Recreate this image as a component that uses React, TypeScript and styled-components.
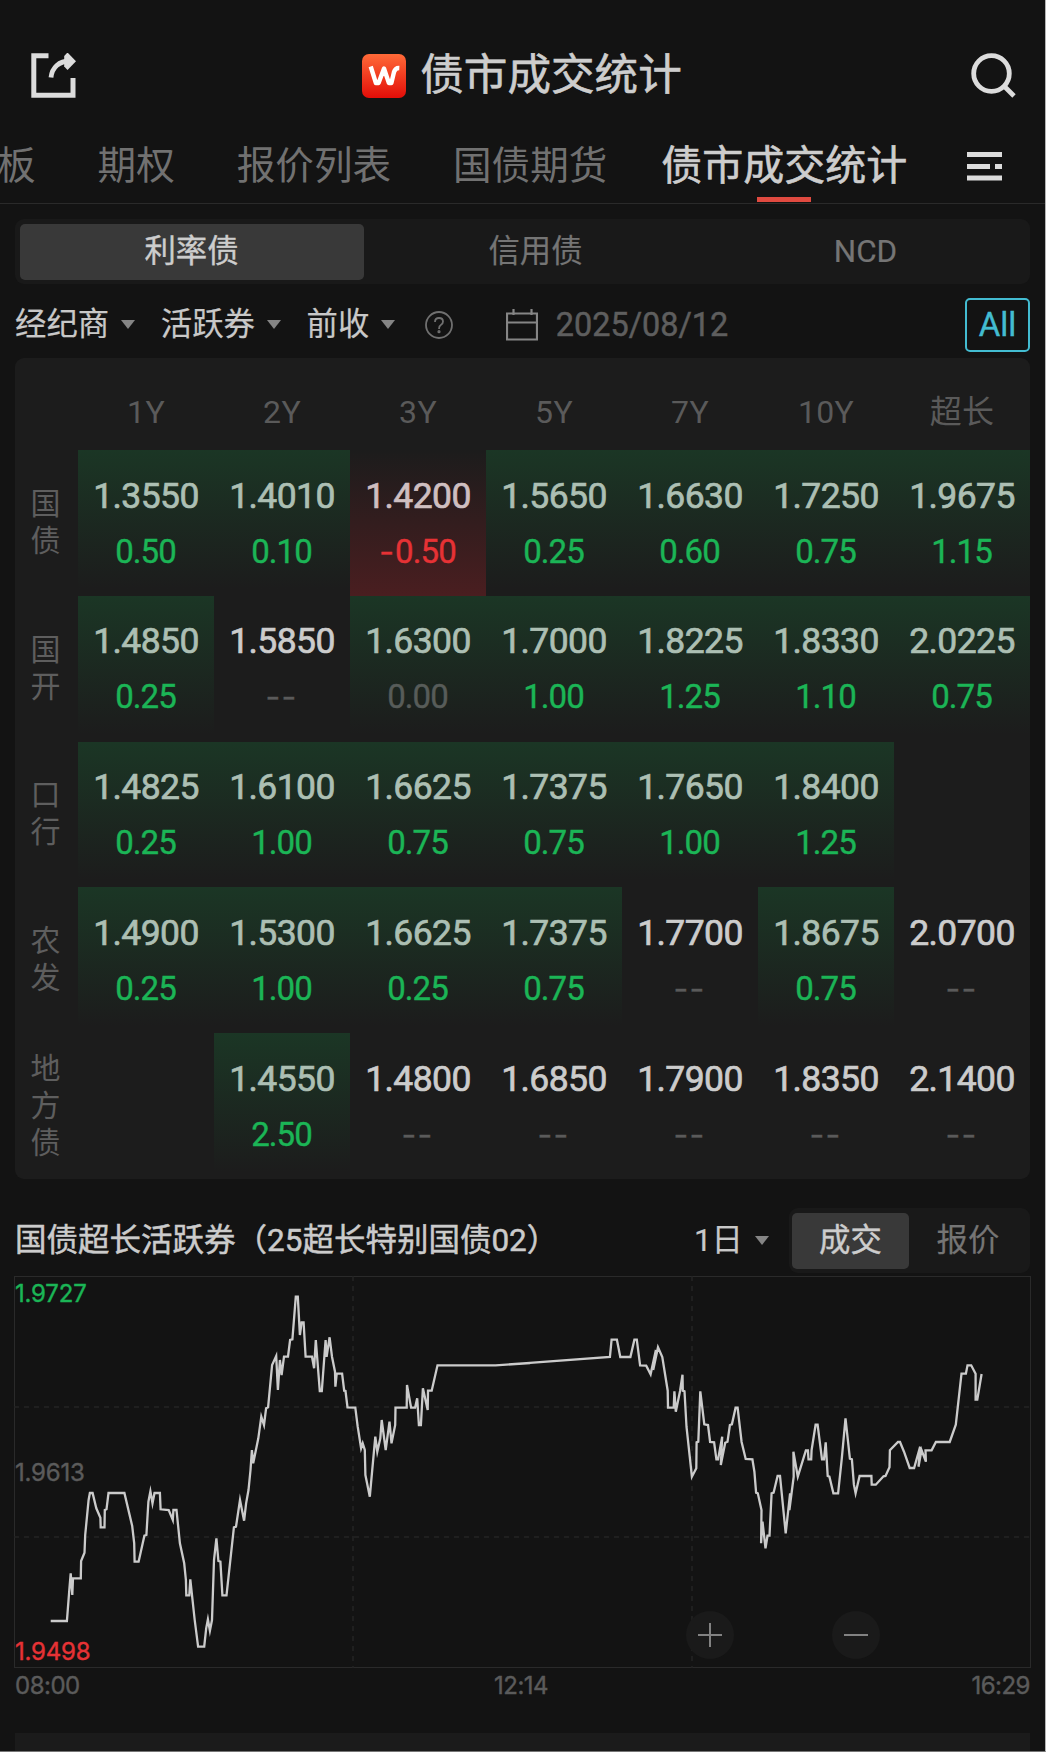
import React from "react";
import styled, { createGlobalStyle, css } from "styled-components";

const GlobalStyle = createGlobalStyle`
  * { box-sizing: border-box; }
  body { margin: 0; background: #131313; }
`;

const CJK = `"Noto Sans CJK SC", sans-serif`;
const UI = `Roboto, "Noto Sans CJK SC", sans-serif`;

const Page = styled.main`
  width: 1046px;
  height: 1752px;
  overflow: hidden;
  display: flex;
  flex-direction: column;
  background: #131313;
  border-right: 1px solid #b4b4b4;
  border-bottom: 1px solid #767676;
  color: #cbcbcb;
  font-family: ${UI};
  white-space: nowrap;
`;

const TopBar = styled.header`
  height: 130px;
  padding: 21px 28px 0 31px;
  display: flex;
  align-items: center;
  justify-content: space-between;
  flex: none;
`;

const Brand = styled.div`
  display: flex;
  align-items: center;
  gap: 14px;
  margin-right: 4px;
`;

const Title = styled.h1`
  margin: 0;
  padding-bottom: 9px;
  font: 400 43.6px/60px ${CJK};
  color: #cdcdcd;
  -webkit-text-stroke: 0.6px #cdcdcd;
`;

const TabBar = styled.nav`
  height: 74px;
  flex: none;
  display: flex;
  border-bottom: 1px solid #2a2a2a;
  overflow: hidden;
`;

const Tab = styled.div<{ $active?: boolean }>`
  flex: none;
  display: flex;
  flex-direction: column;
  align-items: center;
  justify-content: space-between;
  margin-right: ${(p) => (p.$active ? 60 : 62)}px;
  font: 400 38.6px/65px ${CJK};
  color: #717171;
  &:first-child { margin-left: -3px; }
  ${(p) =>
    p.$active &&
    css`
      margin-left: -8px;
      font-size: 41px;
      color: #cdcdcd;
      -webkit-text-stroke: 0.6px #cdcdcd;
    `}
`;

const TabText = styled.span`
  height: 65px;
`;

const Underline = styled.i`
  width: 54px;
  height: 5px;
  margin-bottom: 1px;
  background: #e04a40;
`;

const MenuIcon = styled.svg`
  flex: none;
  margin-top: 22px;
`;

const Segments = styled.div`
  margin: 15px 15px 0;
  height: 65px;
  flex: none;
  padding: 5px 4.5px 4px;
  display: grid;
  grid-template-columns: 344px 344px 316px;
  background: #191919;
  border-radius: 9px;
`;

const Segment = styled.div<{ $active?: boolean }>`
  border-radius: 5px;
  background: ${(p) => (p.$active ? "#393939" : "transparent")};
  color: ${(p) => (p.$active ? "#cdcdcd" : "#757575")};
  font-size: 31.4px;
  line-height: 56px;
  text-align: center;
  -webkit-text-stroke: ${(p) => (p.$active ? "0.4px" : "0.2px")} currentColor;
`;

const Filters = styled.div`
  height: 74px;
  flex: none;
  padding: 7px 15px 0;
  display: flex;
  align-items: center;
`;

const Dropdown = styled.div<{ $gap: number }>`
  display: flex;
  align-items: center;
  gap: 12px;
  margin-right: ${(p) => p.$gap}px;
  font-size: 31.4px;
  line-height: 50px;
  color: #c8c8c8;
  -webkit-text-stroke: 0.2px currentColor;
`;

const Caret = styled.i`
  border: 7.5px solid transparent;
  border-top: 9px solid #858585;
  border-bottom: 0;
`;

const DateText = styled.span`
  margin-left: 18px;
  font-size: 32.4px;
  color: #5e5e5e;
  -webkit-text-stroke: 0.5px currentColor;
`;

const AllButton = styled.div`
  margin-left: auto;
  width: 65px;
  height: 54px;
  border: 2px solid #43bcd1;
  border-radius: 5px;
  color: #43bcd1;
  font-size: 33px;
  line-height: 49px;
  text-align: center;
  -webkit-text-stroke: 0.4px currentColor;
`;

const YieldCard = styled.section`
  margin: 0 15px;
  height: 821px;
  flex: none;
  background: #1c1c1c;
  border-radius: 9px;
`;

const GridRow = styled.div<{ $head?: boolean }>`
  display: grid;
  grid-template-columns: 63px repeat(7, 136px);
  height: ${(p) => (p.$head ? "92px" : "145.8px")};
`;

const TermHead = styled.div`
  padding-top: 17px;
  text-align: center;
  font-size: 32px;
  line-height: 74px;
  letter-spacing: 0.3px;
  color: #5a5a5a;
`;

const RowLabel = styled.div`
  display: flex;
  align-items: center;
  justify-content: center;
  writing-mode: vertical-rl;
  font: 400 30px/44px ${CJK};
  letter-spacing: 6.6px;
  padding-top: 3px;
  padding-right: 2px;
  color: #5e5e5e;
`;

type Tone = "up" | "down" | "flat" | "none" | "empty";
const fills: Record<Tone, string> = {
  up: "linear-gradient(#1b3625, #1c1c1c 95%)",
  flat: "linear-gradient(#1b3625, #1c1c1c 95%)",
  down: "linear-gradient(#1c1c1c, #4a1e20)",
  none: "none",
  empty: "none",
};
const valueInk: Record<Tone, string> = {
  up: "#acbfb3",
  flat: "#acbfb3",
  down: "#cfbfc0",
  none: "#cccccc",
  empty: "#cccccc",
};
const deltaInk: Record<Tone, string> = {
  up: "#1bb556",
  flat: "#575c59",
  down: "#e63235",
  none: "#5a5a5a",
  empty: "#5a5a5a",
};

const Cell = styled.div<{ $tone: Tone }>`
  background: ${(p) => fills[p.$tone]};
  display: flex;
  flex-direction: column;
  align-items: center;
  padding-top: 17.5px;
`;

const Value = styled.span<{ $tone: Tone }>`
  font-size: 35.5px;
  line-height: 56px;
  letter-spacing: -0.6px;
  color: ${(p) => valueInk[p.$tone]};
  -webkit-text-stroke: 0.7px currentColor;
`;

const Delta = styled.span<{ $tone: Tone }>`
  font-size: 33px;
  line-height: 55px;
  letter-spacing: -0.9px;
  margin-right: 1px;
  color: ${(p) => deltaInk[p.$tone]};
  -webkit-text-stroke: 0.4px currentColor;
`;

const Dash = styled.span`
  font-family: Inter, sans-serif;
  font-size: 32px;
  letter-spacing: 1.2px;
`;

const ChartHead = styled.div`
  margin: 29px 15px 0;
  height: 65px;
  flex: none;
  display: flex;
  align-items: center;
`;

const ChartTitle = styled.h2`
  margin: 0;
  flex: 1;
  font: 400 31.5px/60px ${UI};
  color: #cbcbcb;
  -webkit-text-stroke: 0.5px #cbcbcb;
`;

const Toggle = styled.div`
  width: 241px;
  height: 65px;
  padding: 5px 3px 4px;
  display: grid;
  grid-template-columns: 117px 1fr;
  background: #191919;
  border-radius: 9px;
`;

const ChartFrame = styled.div`
  position: relative;
  margin: 3px 14px 0;
  height: 392px;
  flex: none;
  border: 1px solid #2a2a2a;
`;

const Plot = styled.svg`
  display: block;
  margin: -1px;
`;

const AxisValue = styled.span<{ $top: number; $color: string }>`
  position: absolute;
  left: 0;
  top: ${(p) => p.$top}px;
  font: 400 24px/30px Inter, sans-serif;
  letter-spacing: -0.2px;
  color: ${(p) => p.$color};
  -webkit-text-stroke: 0.4px currentColor;
`;

const ZoomButton = styled.div<{ $left: number }>`
  position: absolute;
  left: ${(p) => p.$left}px;
  top: 334px;
  width: 48px;
  height: 48px;
  border-radius: 50%;
  background: #1a1a1a;
  display: grid;
  place-items: center;
`;

const TimeAxis = styled.div`
  margin: 3px 15px 0 15px;
  height: 62px;
  flex: none;
  display: grid;
  grid-template-columns: 479px 1fr auto;
  font: 400 24px/30px Inter, sans-serif;
  letter-spacing: -0.5px;
  color: #5b5b5b;
  -webkit-text-stroke: 0.4px currentColor;
`;

const NextCard = styled.div`
  margin: 0 15px;
  flex: 1;
  background: #1b1b1b;
`;

const terms = ["1Y", "2Y", "3Y", "5Y", "7Y", "10Y", "超长"];

const rows: { name: string; cells: [string, string][] }[] = [
  { name: "国债", cells: [["1.3550", "0.50"], ["1.4010", "0.10"], ["1.4200", "-0.50"], ["1.5650", "0.25"], ["1.6630", "0.60"], ["1.7250", "0.75"], ["1.9675", "1.15"]] },
  { name: "国开", cells: [["1.4850", "0.25"], ["1.5850", "--"], ["1.6300", "0.00"], ["1.7000", "1.00"], ["1.8225", "1.25"], ["1.8330", "1.10"], ["2.0225", "0.75"]] },
  { name: "口行", cells: [["1.4825", "0.25"], ["1.6100", "1.00"], ["1.6625", "0.75"], ["1.7375", "0.75"], ["1.7650", "1.00"], ["1.8400", "1.25"], ["", ""]] },
  { name: "农发", cells: [["1.4900", "0.25"], ["1.5300", "1.00"], ["1.6625", "0.25"], ["1.7375", "0.75"], ["1.7700", "--"], ["1.8675", "0.75"], ["2.0700", "--"]] },
  { name: "地方债", cells: [["", ""], ["1.4550", "2.50"], ["1.4800", "--"], ["1.6850", "--"], ["1.7900", "--"], ["1.8350", "--"], ["2.1400", "--"]] },
];

const toneOf = (delta: string): Tone => {
  if (delta === "") return "empty";
  if (delta === "--") return "none";
  if (delta === "0.00") return "flat";
  return delta.startsWith("-") ? "down" : "up";
};

const morning = [
  150,1053, 198,1053, 205,960, 209,910, 214,975, 216,925, 239,925, 240,873, 250,848, 252,795, 262,690, 266,669, 274,669, 285,715, 297,743, 298,772, 309,772, 310,720, 315,718, 321,669, 368,669, 391,768, 397,820, 398,875, 410,875, 427,797, 433,795, 439,695, 445,664, 451,700, 457,669, 473,669, 475,718, 499,720, 511,750, 513,720, 522,720, 532,820, 545,880, 550,930, 551,976, 560,976, 563,928, 576,1050, 586,1130, 604,1130, 610,1075, 615,1048, 621,1082, 627,1050, 633,870, 640,805, 646,873, 652,875, 658,976, 670,976, 692,772, 698,770, 710,690, 722,752, 728,700, 735,660, 741,600, 745,540, 749,580, 764,505, 773,440, 781,465, 787,415, 793,412, 805,285, 817,258, 822,360, 828,270, 833,315, 840,260, 852,260, 858,210, 865,208, 875,80, 881,80, 887,195, 892,157, 898,157, 904,260, 923,260, 929,295, 934,210, 946,363, 952,363, 963,210, 966,260, 975,202, 982,260, 991,305, 992,350, 996,311, 1012,311, 1018,362, 1022,363, 1028,412, 1051,413, 1058,470, 1068,535, 1073,520, 1079,540, 1081,615, 1094,680, 1110,500, 1116,545, 1125,505, 1129,450, 1141,540, 1152,455, 1158,520, 1169,465, 1170,413, 1203,413, 1204,345, 1216,413, 1228,413, 1234,385, 1239,465, 1245,465, 1251,355, 1265,420, 1266,362, 1277,362, 1294,286, 1466,286, 1568,279,
];
const afternoon = [
  0,281, 268,261, 273,209, 289,209, 299,261, 329,261, 341,209, 348,209, 358,286, 376,287, 389,313, 405,240, 397,300, 411,232, 424,261, 440,362, 441,413, 458,413, 460,364, 464,425, 477,362, 484,314, 485,362, 490,364, 496,470, 512,620, 525,595, 526,517, 531,515, 537,364, 549,463, 560,465, 566,516, 578,517, 585,568, 590,568, 602,500, 598,585, 611,518, 618,515, 625,465, 631,463, 642,413, 648,413, 660,516, 672,567, 692,568, 698,605, 703,668, 708,670, 719,720, 718,820, 722,755, 731,835, 737,797, 743,797, 749,670, 755,668, 767,618, 774,618, 791,790, 804,670, 802,720, 815,620, 814,545, 827,620, 851,541, 857,541, 859,568, 867,568, 868,540, 880,464, 886,464, 899,568, 905,568, 910,517, 916,618, 921,620, 933,670, 947,670, 958,565, 969,445, 982,566, 988,568, 994,644, 999,670, 1011,618, 1046,618, 1047,644, 1059,644, 1082,619, 1088,618, 1100,592, 1101,541, 1125,516, 1131,516, 1143,545, 1160,594, 1173,594, 1191,530, 1186,590, 1195,540, 1208,575, 1207,541, 1225,541, 1238,516, 1279,516, 1297,464, 1314,311, 1327,311, 1332,286, 1343,286, 1356,311, 1356,389, 1361,389, 1374,312,
];

const project = (samples: number[], perPixel: number, offset: number) => {
  const out: string[] = [];
  for (let i = 0; i < samples.length; i += 2) {
    out.push(`${(samples[i] / perPixel + offset).toFixed(1)},${((samples[i + 1] - 18) / 3).toFixed(1)}`);
  }
  return out.join(" ");
};

const pricePath = `${project(morning, 2.958, -14)} ${project(afternoon, 2.975, 505.8)}`;

const ShareIcon = () => (
  <svg width="46" height="46" viewBox="0 0 46 46" fill="none" stroke="#dcdcdc">
    <path d="M17.5 2.8H2.8V42.2H42V25" strokeWidth="5" />
    <path d="M20 24.5C21 14.5 28 8 39 8" strokeWidth="4.8" />
    <path d="M36.5 -0.5L45 8.3L36.5 17L33.2 13.5V3Z" fill="#dcdcdc" stroke="none" />
  </svg>
);

const SearchIcon = () => (
  <svg width="46" height="46" viewBox="0 0 46 46" fill="none" stroke="#dcdcdc" strokeWidth="4.8">
    <circle cx="20.5" cy="20.5" r="17.8" />
    <path d="M32.5 32.5L43 43" />
  </svg>
);

const Logo = () => (
  <svg width="44" height="44" viewBox="0 0 44 44">
    <defs>
      <linearGradient id="logoFill" x1="0" y1="0" x2="0" y2="1">
        <stop offset="0" stopColor="#ff6a38" />
        <stop offset="1" stopColor="#e30d08" />
      </linearGradient>
    </defs>
    <rect width="44" height="44" rx="7" fill="url(#logoFill)" />
    <path d="M8.7 12.5L13.9 29H16.6L22 14.5L26.9 29H29.4L32 18Q33.3 13.8 37.3 14" fill="none" stroke="#fff" strokeWidth="4.4" strokeLinejoin="round" />
  </svg>
);

const CalendarIcon = styled.svg`
  margin-left: 53px;
`;

const DeltaText = ({ text }: { text: string }) => {
  const dashes = text.match(/^-+/)?.[0] ?? "";
  return (
    <>
      {dashes && <Dash>{dashes}</Dash>}
      {text.slice(dashes.length)}
    </>
  );
};

export default function App() {
  return (
    <>
      <GlobalStyle />
      <Page>
        <TopBar>
          <ShareIcon />
          <Brand>
            <Logo />
            <Title>债市成交统计</Title>
          </Brand>
          <SearchIcon />
        </TopBar>

        <TabBar>
          {["板", "期权", "报价列表", "国债期货"].map((name) => (
            <Tab key={name}>
              <TabText>{name}</TabText>
            </Tab>
          ))}
          <Tab $active>
            <TabText>债市成交统计</TabText>
            <Underline />
          </Tab>
          <MenuIcon width="35" height="29" viewBox="0 0 35 29" fill="#dcdcdc">
            <rect width="35" height="5" />
            <rect y="12" width="23" height="5" />
            <rect x="28" y="12" width="7" height="5" />
            <rect y="23.5" width="35" height="5" />
          </MenuIcon>
        </TabBar>

        <Segments>
          <Segment $active>利率债</Segment>
          <Segment>信用债</Segment>
          <Segment>NCD</Segment>
        </Segments>

        <Filters>
          <Dropdown $gap={25.6}>经纪商<Caret /></Dropdown>
          <Dropdown $gap={25.6}>活跃券<Caret /></Dropdown>
          <Dropdown $gap={29.5}>前收<Caret /></Dropdown>
          <svg width="28" height="28" viewBox="0 0 28 28" fill="none" stroke="#707070" strokeWidth="1.8">
            <circle cx="14" cy="14" r="13" />
            <path d="M10 11Q10 7 14 7Q18 7 18 10.5Q18 12.8 15.8 14Q14 15 14 18" />
            <circle cx="14" cy="20.7" r="0.7" />
          </svg>
          <CalendarIcon width="32" height="32" viewBox="0 0 32 32" fill="none" stroke="#858585" strokeWidth="2.2">
            <path d="M1 4.5H31V30.5H1ZM1 13.5H31M7.5 0V6M25.5 0V6" />
          </CalendarIcon>
          <DateText>2025/08/12</DateText>
          <AllButton>All</AllButton>
        </Filters>

        <YieldCard>
          <GridRow $head>
            <span />
            {terms.map((term) => (
              <TermHead key={term}>{term}</TermHead>
            ))}
          </GridRow>
          {rows.map((row) => (
            <GridRow key={row.name}>
              <RowLabel>{row.name}</RowLabel>
              {row.cells.map(([value, delta], i) => {
                const tone = toneOf(delta);
                return (
                  <Cell key={i} $tone={tone}>
                    <Value $tone={tone}>{value}</Value>
                    <Delta $tone={tone}>
                      <DeltaText text={delta} />
                    </Delta>
                  </Cell>
                );
              })}
            </GridRow>
          ))}
        </YieldCard>

        <ChartHead>
          <ChartTitle>国债超长活跃券（25超长特别国债02）</ChartTitle>
          <Dropdown $gap={20}>1日<Caret /></Dropdown>
          <Toggle>
            <Segment $active>成交</Segment>
            <Segment>报价</Segment>
          </Toggle>
        </ChartHead>

        <ChartFrame>
          <Plot width="1017" height="392" viewBox="0 0 1017 392" fill="none">
            <path d="M0 131H1017M0 261H1017M339 0V392M678 0V392" stroke="#252525" strokeWidth="1.5" strokeDasharray="5 5" />
            <polyline points={pricePath} stroke="#cbcbcb" strokeWidth="2.3" strokeMiterlimit="6" />
          </Plot>
          <AxisValue $top={2} $color="#1bb556">1.9727</AxisValue>
          <AxisValue $top={181} $color="#5b5b5b">1.9613</AxisValue>
          <AxisValue $top={360} $color="#e63235">1.9498</AxisValue>
          <ZoomButton $left={671}>
            <svg width="24" height="24" stroke="#828282" strokeWidth="2"><path d="M0 12H24M12 0V24" /></svg>
          </ZoomButton>
          <ZoomButton $left={817}>
            <svg width="24" height="24" stroke="#828282" strokeWidth="2"><path d="M0 12H24" /></svg>
          </ZoomButton>
        </ChartFrame>

        <TimeAxis>
          <span>08:00</span>
          <span>12:14</span>
          <span>16:29</span>
        </TimeAxis>
        <NextCard />
      </Page>
    </>
  );
}
